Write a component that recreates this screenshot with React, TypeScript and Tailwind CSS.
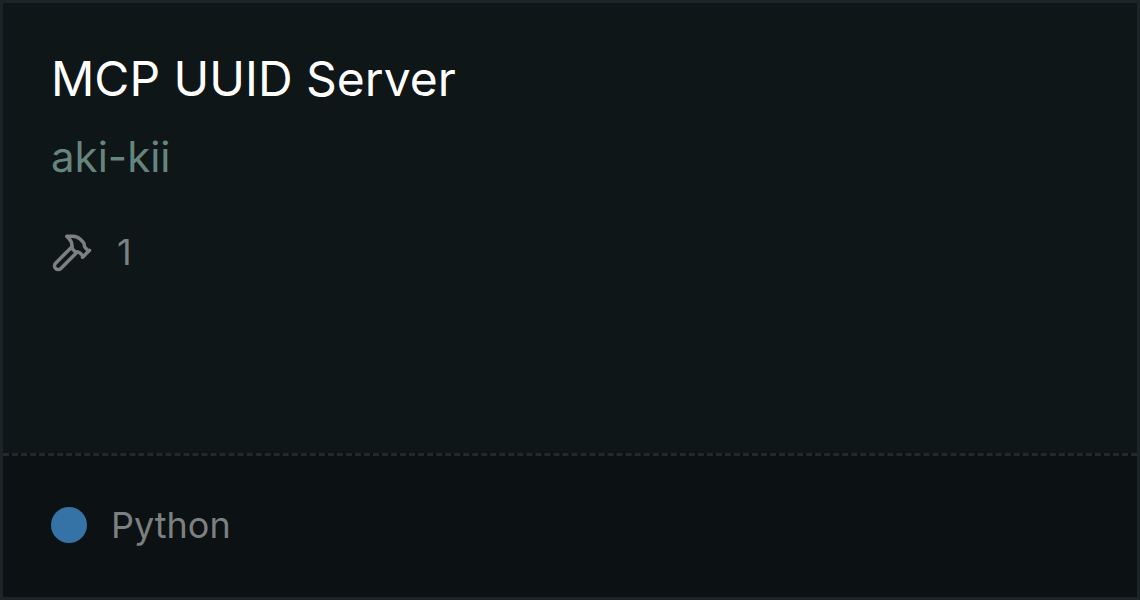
import { Hammer } from "lucide-react";

export default function App() {
  return (
    <article className="flex min-h-screen flex-col border-3 border-[#1d2427] bg-[#0f1618] font-['Inter',sans-serif]">
      <div className="flex-1 px-12 pt-12">
        <h2 className="text-[48px] leading-[56px] text-white">MCP UUID Server</h2>
        <a href="#aki-kii" className="mt-[18px] block w-fit text-[42px] leading-[63px] text-[#66857d]">
          aki-kii
        </a>
        <div className="mt-10 flex items-center gap-6 text-[36px] leading-[48px] text-[#7c8081]">
          <Hammer className="size-[42px]" strokeWidth={2} aria-hidden="true" />
          <span>1</span>
        </div>
      </div>
      <footer className="flex items-center gap-6 border-t-3 border-dashed border-[#24292b] bg-[#0c1113] px-12 pt-[42px] pb-[45px] text-[36px] leading-[54px] text-[#7c8081]">
        <span className="size-9 rounded-full bg-[#3572a5]" />
        <span>Python</span>
      </footer>
    </article>
  );
}
